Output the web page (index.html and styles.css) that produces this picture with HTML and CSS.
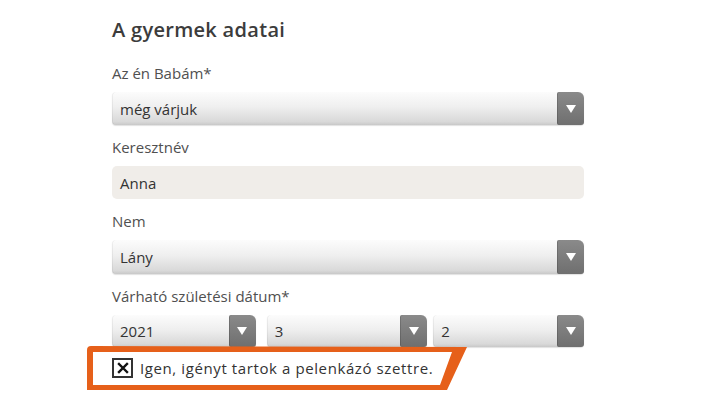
FILE: index.html
```html
<!DOCTYPE html>
<html lang="hu">
<head>
<meta charset="utf-8">
<title>A gyermek adatai</title>
<link rel="stylesheet" href="styles.css">
</head>
<body>
<div class="form">
  <h2 class="title">A gyermek adatai</h2>

  <div class="label">Az én Babám*</div>
  <div class="select wide">
    <span class="value">még várjuk</span>
    <span class="btn"><svg width="10" height="8" viewBox="0 0 10 8"><path d="M0 0H10L5 8Z" fill="#fff"/></svg></span>
  </div>

  <div class="label">Keresztnév</div>
  <div class="input"><span class="value">Anna</span></div>

  <div class="label">Nem</div>
  <div class="select wide tall">
    <span class="value">Lány</span>
    <span class="btn"><svg width="10" height="8" viewBox="0 0 10 8"><path d="M0 0H10L5 8Z" fill="#fff"/></svg></span>
  </div>

  <div class="label">Várható születési dátum*</div>
  <div class="dates">
    <div class="select d1">
      <span class="value">2021</span>
      <span class="btn"><svg width="10" height="8" viewBox="0 0 10 8"><path d="M0 0H10L5 8Z" fill="#fff"/></svg></span>
    </div>
    <div class="select d2">
      <span class="value">3</span>
      <span class="btn"><svg width="10" height="8" viewBox="0 0 10 8"><path d="M0 0H10L5 8Z" fill="#fff"/></svg></span>
    </div>
    <div class="select d3">
      <span class="value">2</span>
      <span class="btn"><svg width="10" height="8" viewBox="0 0 10 8"><path d="M0 0H10L5 8Z" fill="#fff"/></svg></span>
    </div>
  </div>

  <div class="consent">
    <svg class="frame" width="382" height="45" viewBox="0 0 382 45">
      <path fill="#e6601a" fill-rule="evenodd" d="M4 0 L380 1 L360 44 L0 44 L0 4 Q0 0 4 0 Z M6 6 L365 6 L353 39 L6 39 Z"/>
    </svg>
    <span class="check"><svg width="12" height="12" viewBox="0 0 12 12"><path d="M2 2L10 10M10 2L2 10" stroke="#111" stroke-width="2.4" stroke-linecap="square"/></svg></span>
    <span class="ctext">Igen, igényt tartok a pelenkázó szettre.</span>
  </div>
</div>
</body>
</html>
```

FILE: styles.css
```css
* { box-sizing: border-box; }
html, body { margin: 0; padding: 0; background: #fff; }
body {
  font-family: "Open Sans", "DejaVu Sans", sans-serif;
  color: #3a3a3a;
}
.form {
  width: 584px;
  padding: 16px 0 0 112px;
}
.title {
  margin: 0 0 19px;
  font-size: 20px;
  line-height: 28px;
  font-weight: 600;
  color: #3c3c3c;
  letter-spacing: 0.3px;
}
.label {
  font-size: 15px;
  line-height: 20px;
  color: #505050;
  margin-bottom: 9px;
}
.select {
  display: flex;
  align-items: stretch;
  height: 33px;
  border-radius: 4px;
  background: linear-gradient(#fcfcfc 0%, #efefef 45%, #d9d9d9 90%, #c8c8c8 100%);
  box-shadow: 0 1px 1px rgba(0,0,0,0.12), inset 1px 0 0 rgba(0,0,0,0.05);
  margin-bottom: 12px;
}
.select.tall { height: 34px; }
.value {
  flex: 1;
  display: flex;
  align-items: center;
  padding-left: 8px;
  font-size: 15px;
  color: #333;
}
.btn {
  width: 27px;
  display: flex;
  align-items: center;
  justify-content: center;
  border-radius: 2px 6px 3px 2px;
  background: linear-gradient(#8a8a8a, #6f6f6f);
  box-shadow: inset 1px 0 0 rgba(0,0,0,0.15);
}
.input {
  display: flex;
  height: 33px;
  border-radius: 5px;
  background: #f0ede9;
  margin-bottom: 12px;
}
.dates {
  display: flex;
  margin-bottom: 0;
}
.dates .select { margin-bottom: 0; height: 32px; }
.d1 { width: 144px; margin-right: 11px; }
.d2 { width: 161px; margin-right: 6px; }
.d3 { width: 151px; }
.consent {
  position: relative;
  width: 382px;
  height: 45px;
  margin: -1px 0 0 -25px;
  display: flex;
  align-items: center;
  padding-left: 25px;
}
.frame {
  position: absolute;
  left: 0;
  top: 0;
}
.check {
  position: relative;
  width: 21px;
  height: 20px;
  border: 2px solid #333;
  background: #fff;
  display: flex;
  align-items: center;
  justify-content: center;
  margin-right: 7px;
  margin-top: -2px;
}
.ctext {
  position: relative;
  font-size: 15px;
  color: #333;
  letter-spacing: 0.6px;
  margin-top: -1px;
}
```
